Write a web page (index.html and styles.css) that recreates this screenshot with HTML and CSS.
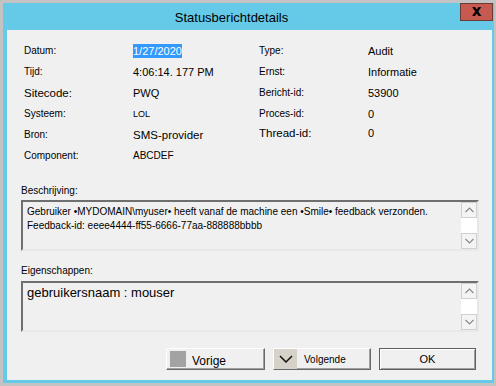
FILE: index.html
```html
<!DOCTYPE html>
<html lang="nl">
<head>
    <meta charset="UTF-8">
    <title>Statusberichtdetails</title>
    <link rel="stylesheet" href="styles.css">
</head>
<body>
    <div class="window">
        <div class="titlebar">
            <div class="title">Statusberichtdetails</div>
            <div class="close">x</div>
        </div>

        <div class="content">
            <div class="info">
                <span class="lbl">Datum:</span>
                <span class="val"><span class="sel">1/27/2020</span></span>
                <span class="lbl">Type:</span>
                <span class="val">Audit</span>

                <span class="lbl">Tijd:</span>
                <span class="val">4:06:14. 177 PM</span>
                <span class="lbl">Ernst:</span>
                <span class="val">Informatie</span>

                <span class="lbl big">Sitecode:</span>
                <span class="val">PWQ</span>
                <span class="lbl">Bericht-id:</span>
                <span class="val">53900</span>

                <span class="lbl">Systeem:</span>
                <span class="val small">LOL</span>
                <span class="lbl">Proces-id:</span>
                <span class="val">0</span>

                <span class="lbl">Bron:</span>
                <span class="val big">SMS-provider</span>
                <span class="lbl big raise">Thread-id:</span>
                <span class="val raise">0</span>

                <span class="lbl">Component:</span>
                <span class="val mid">ABCDEF</span>
                <span></span>
                <span></span>
            </div>

            <div class="field-label">Beschrijving:</div>
            <div class="textbox">
                <div class="text">
                    Gebruiker •MYDOMAIN\myuser• heeft vanaf de machine een •Smile• feedback verzonden.<br>
                    Feedback-id: eeee4444-ff55-6666-77aa-888888bbbb
                </div>
                <div class="scroll">
                    <div class="arrow"><svg width="9" height="6" viewBox="0 0 9 6"><path d="M0.5 5 L4.5 1 L8.5 5" fill="none" stroke="#8a8a8a" stroke-width="1.2"/></svg></div>
                    <div class="track"></div>
                    <div class="arrow"><svg width="9" height="6" viewBox="0 0 9 6"><path d="M0.5 1 L4.5 5 L8.5 1" fill="none" stroke="#8a8a8a" stroke-width="1.2"/></svg></div>
                </div>
            </div>

            <div class="field-label second">Eigenschappen:</div>
            <div class="textbox">
                <div class="text large">gebruikersnaam : mouser</div>
                <div class="scroll">
                    <div class="arrow"><svg width="9" height="6" viewBox="0 0 9 6"><path d="M0.5 5 L4.5 1 L8.5 5" fill="none" stroke="#8a8a8a" stroke-width="1.2"/></svg></div>
                    <div class="track"></div>
                    <div class="arrow"><svg width="9" height="6" viewBox="0 0 9 6"><path d="M0.5 1 L4.5 5 L8.5 1" fill="none" stroke="#8a8a8a" stroke-width="1.2"/></svg></div>
                </div>
            </div>

            <div class="buttons">
                <div class="btn btn-prev">
                    <span class="square"></span>
                    <span>Vorige</span>
                </div>
                <div class="btn btn-next">
                    <span class="chevron"><svg width="14" height="8" viewBox="0 0 14 8"><path d="M1 1 L7 7 L13 1" fill="none" stroke="#111" stroke-width="1.5"/></svg></span>
                    <span>Volgende</span>
                </div>
                <div class="btn btn-ok">OK</div>
            </div>
        </div>
    </div>
</body>
</html>
```

FILE: styles.css
```css
body {
    margin: 0;
    background-color: #c3c3c3;
    font-family: 'Liberation Sans', Arial, sans-serif;
    color: #000;
}

.window {
    margin: 3px 2px 3px 3px;
    height: 380px;
    background-color: #65c9e8;
    display: flex;
    flex-direction: column;
}

.titlebar {
    height: 27px;
    display: flex;
    align-items: center;
}

.title {
    flex: 1;
    text-align: center;
    font-size: 13px;
    padding-top: 1px;
}

.close {
    align-self: flex-start;
    width: 31px;
    height: 16px;
    margin-right: 1px;
    background-color: #c75a50;
    border: 1px solid #6a3a34;
    font-family: 'DejaVu Sans', sans-serif;
    font-weight: bold;
    font-size: 15px;
    line-height: 14px;
    text-align: center;
}

.content {
    margin: 0 2px 3px 4px;
    flex: 1;
    background-color: #f0f0f0;
    padding: 10px 13px 0 14px;
}

.info {
    display: grid;
    grid-template-columns: 109px 126px 109px 1fr;
    grid-auto-rows: 21px;
    align-items: center;
    margin-left: 3px;
}

.lbl {
    font-size: 10px;
}

.val {
    font-size: 11px;
}

.big {
    font-size: 11.5px;
}

.mid {
    font-size: 10px;
}

.small {
    font-size: 9px;
}

.raise {
    position: relative;
    top: -2px;
}

.sel {
    background-color: #3399ff;
    color: #fff;
    padding: 1px 0;
}

.field-label {
    font-size: 10px;
    line-height: 13px;
    margin-top: 18px;
    margin-bottom: 3px;
}

.field-label.second {
    margin-top: 13px;
    margin-bottom: 4px;
}

.textbox {
    height: 47px;
    display: flex;
    border: 2px solid;
    border-color: #6f6f6f #e8e8e8 #e8e8e8 #6f6f6f;
}

.text {
    flex: 1;
    font-size: 10px;
    line-height: 14px;
    padding: 3px 4px;
}

.text.large {
    font-size: 13px;
    line-height: 16px;
    padding-top: 2px;
}

.scroll {
    width: 16px;
    display: flex;
    flex-direction: column;
    background-color: #fff;
}

.arrow {
    height: 14px;
    border: 1px solid #d0d0d0;
    background-color: #f4f4f4;
    display: flex;
    align-items: center;
    justify-content: center;
}

.track {
    flex: 1;
}

.buttons {
    display: flex;
    justify-content: flex-end;
    gap: 8px;
    margin-top: 16px;
    padding-right: 3px;
}

.btn {
    height: 20px;
    background-color: #f0f0f0;
    border: 1px solid;
    border-color: #fff #696969 #696969 #fff;
    box-shadow: inset -1px -1px 0 #a0a0a0;
    display: flex;
    align-items: center;
    box-sizing: content-box;
}

.btn-prev {
    width: 97px;
    font-size: 12px;
}

.square {
    width: 16px;
    height: 16px;
    background-color: #a3a3a3;
    margin: 0 6px 0 3px;
}

.btn-prev span:last-child {
    padding-top: 4px;
}

.btn-next {
    width: 96px;
    font-size: 10px;
}

.chevron {
    width: 23px;
    height: 20px;
    background-color: #d6d2ca;
    display: flex;
    align-items: center;
    justify-content: center;
    margin-right: 7px;
}

.btn-ok {
    width: 95px;
    font-size: 11px;
    justify-content: center;
    border: 1px solid #5f5f5f;
    box-shadow: inset 1px 1px 0 #fff, inset -1px -1px 0 #a0a0a0;
}
```
